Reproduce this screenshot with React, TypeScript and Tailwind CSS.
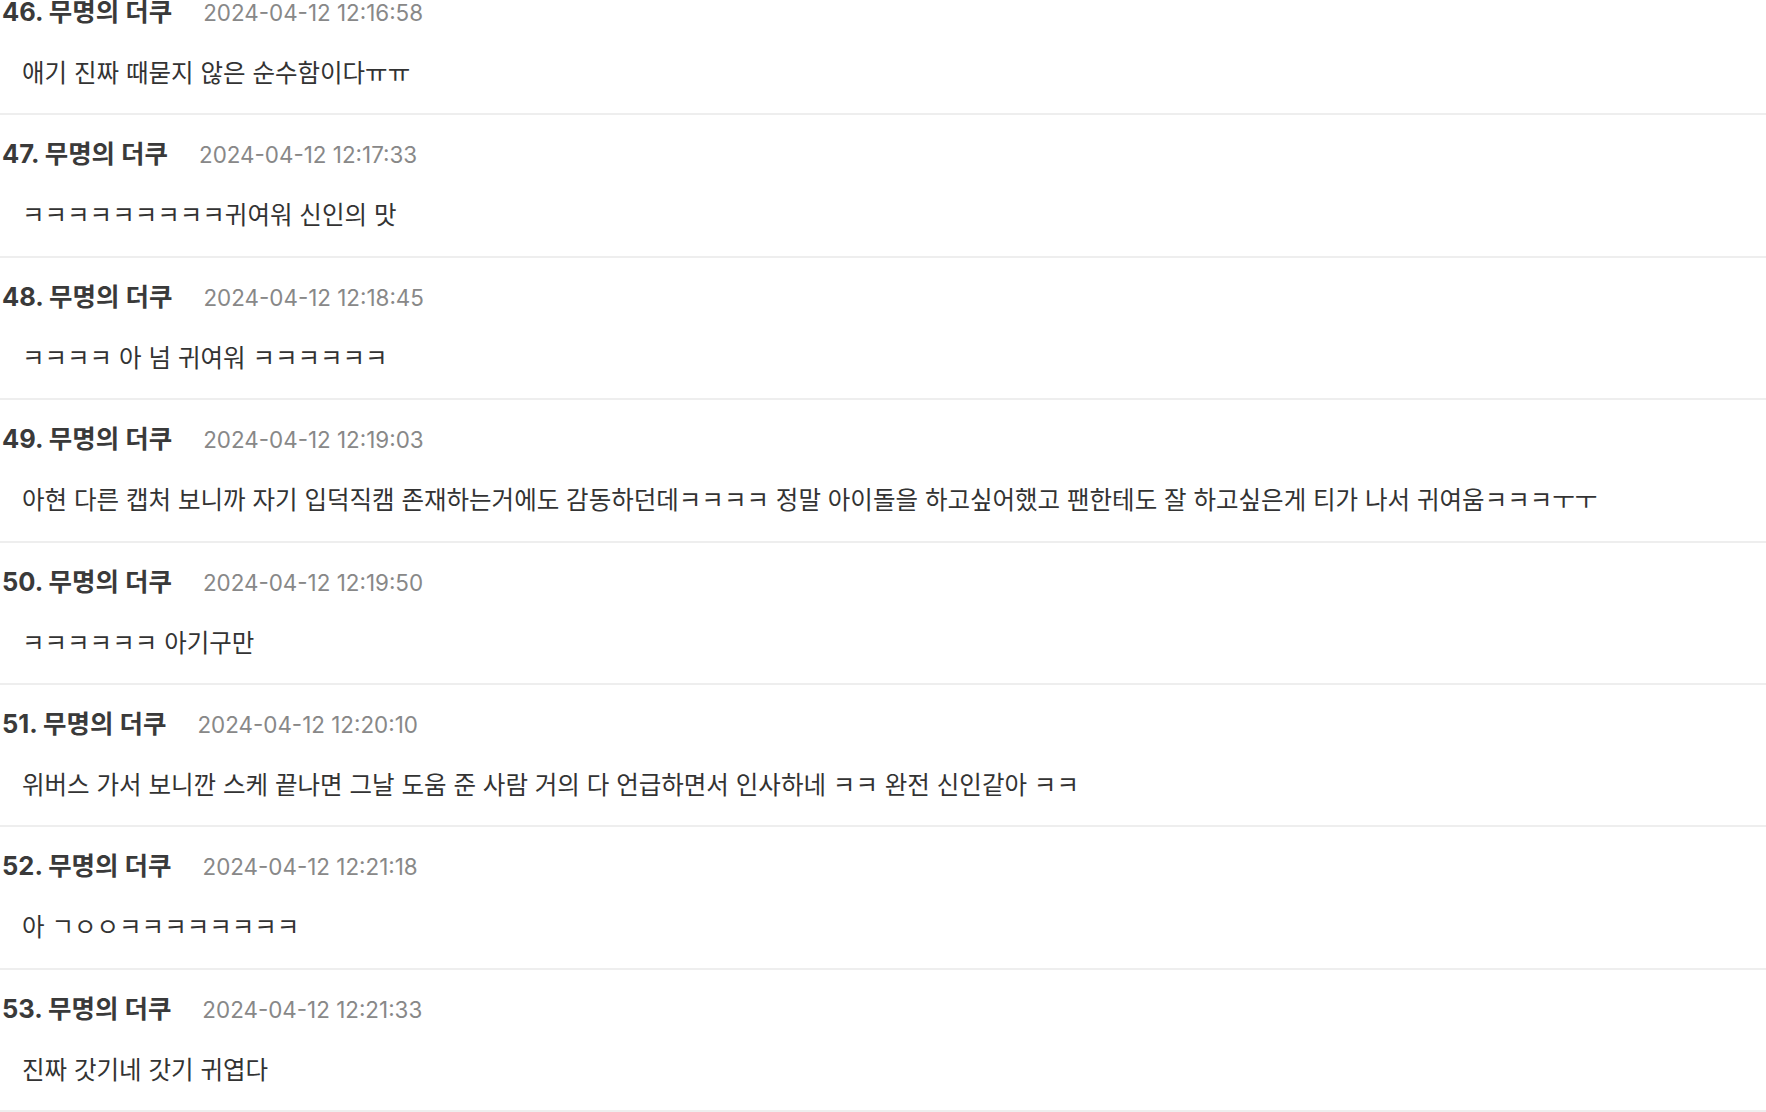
const comments = [
  { no: 46, name: '무명의 더쿠', date: '2024-04-12 12:16:58', text: '애기 진짜 때묻지 않은 순수함이다ㅠㅠ' },
  { no: 47, name: '무명의 더쿠', date: '2024-04-12 12:17:33', text: 'ㅋㅋㅋㅋㅋㅋㅋㅋㅋ귀여워 신인의 맛' },
  { no: 48, name: '무명의 더쿠', date: '2024-04-12 12:18:45', text: 'ㅋㅋㅋㅋ 아 넘 귀여워 ㅋㅋㅋㅋㅋㅋ' },
  {
    no: 49,
    name: '무명의 더쿠',
    date: '2024-04-12 12:19:03',
    text: '아현 다른 캡처 보니까 자기 입덕직캠 존재하는거에도 감동하던데ㅋㅋㅋㅋ 정말 아이돌을 하고싶어했고 팬한테도 잘 하고싶은게 티가 나서 귀여움ㅋㅋㅋㅜㅜ',
  },
  { no: 50, name: '무명의 더쿠', date: '2024-04-12 12:19:50', text: 'ㅋㅋㅋㅋㅋㅋ 아기구만' },
  {
    no: 51,
    name: '무명의 더쿠',
    date: '2024-04-12 12:20:10',
    text: '위버스 가서 보니깐 스케 끝나면 그날 도움 준 사람 거의 다 언급하면서 인사하네 ㅋㅋ 완전 신인같아 ㅋㅋ',
  },
  { no: 52, name: '무명의 더쿠', date: '2024-04-12 12:21:18', text: '아 ㄱㅇㅇㅋㅋㅋㅋㅋㅋㅋㅋ' },
  { no: 53, name: '무명의 더쿠', date: '2024-04-12 12:21:33', text: '진짜 갓기네 갓기 귀엽다' },
];

export default function App() {
  return (
    <div
      className="h-[1112px] overflow-hidden bg-white"
      style={{ fontFamily: 'Inter, "Noto Sans CJK KR", sans-serif' }}
    >
      <ul className="-mt-[27px]">
        {comments.map((c) => (
          <li key={c.no} className="h-[142.4px] border-b-2 border-[#eeeeee] pt-[19px]">
            <div className="flex items-baseline pl-[2px] leading-[40px]">
              <span className="text-[25.5px] font-bold text-[#3a3a3a]">
                {c.no}. {c.name}
              </span>
              <span className="ml-[31px] text-[22.4px] text-[#888888]">{c.date}</span>
            </div>
            <p className="mt-[20px] pl-[22px] text-[24.5px] leading-[40px] text-[#333333]">{c.text}</p>
          </li>
        ))}
      </ul>
    </div>
  );
}
